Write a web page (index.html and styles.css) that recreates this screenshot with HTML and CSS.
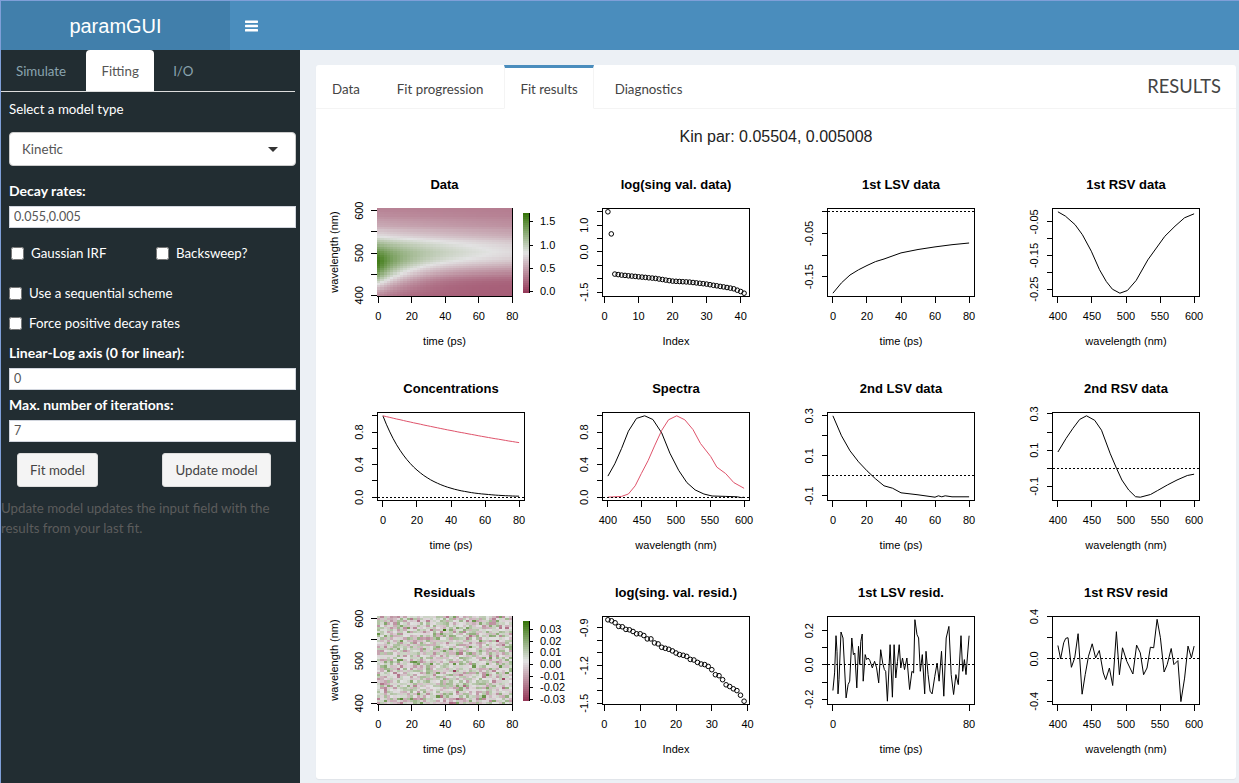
FILE: index.html
```html
<!DOCTYPE html>
<html lang="en">
<head>
    <meta charset="UTF-8">
    <meta name="viewport" content="width=device-width, initial-scale=1.0">
    <title>paramGUI</title>
    <link rel="stylesheet" href="styles.css">
</head>
<body>
    <div class="app">
        <header class="topbar">
            <div class="logo">paramGUI</div>
            <button class="menu-toggle" aria-label="Toggle navigation">
                <svg width="13" height="12" viewBox="0 0 13 12">
                    <rect x="0" y="0.5" width="13" height="2.4" rx="0.6"></rect>
                    <rect x="0" y="4.8" width="13" height="2.4" rx="0.6"></rect>
                    <rect x="0" y="9.1" width="13" height="2.4" rx="0.6"></rect>
                </svg>
            </button>
        </header>
        <div class="layout">
            <aside class="sidebar">
                <ul class="side-tabs">
                    <li>Simulate</li>
                    <li class="active">Fitting</li>
                    <li>I/O</li>
                </ul>
                <div class="side-pane">
                    <div class="field-label first">Select a model type</div>
                    <div class="select-box">
                        <span>Kinetic</span>
                        <span class="caret"></span>
                    </div>
                    <div class="field-label strong decay">Decay rates:</div>
                    <input class="text-input" type="text" value="0.055,0.005">
                    <div class="check-row inline">
                        <label class="check gaussian"><input type="checkbox">Gaussian IRF</label>
                        <label class="check"><input type="checkbox">Backsweep?</label>
                    </div>
                    <label class="check block sequential"><input type="checkbox">Use a sequential scheme</label>
                    <label class="check block positive"><input type="checkbox">Force positive decay rates</label>
                    <div class="field-label strong linear">Linear-Log axis (0 for linear):</div>
                    <input class="text-input" type="text" value="0">
                    <div class="field-label strong iterations">Max. number of iterations:</div>
                    <input class="text-input" type="text" value="7">
                    <div class="button-row">
                        <button class="side-button fit">Fit model</button>
                        <button class="side-button update">Update model</button>
                    </div>
                    <p class="side-note">Update model updates the input field with the results from your last fit.</p>
                </div>
            </aside>
            <main class="content">
                <section class="tab-card">
                    <ul class="card-tabs">
                        <li>Data</li>
                        <li>Fit progression</li>
                        <li class="active">Fit results</li>
                        <li>Diagnostics</li>
                        <li class="card-title">RESULTS</li>
                    </ul>
                    <h4 class="kin-par">Kin par: 0.05504, 0.005008</h4>
                    <div class="plot-grid" id="plots"></div>
                </section>
            </main>
        </div>
    </div>
    <script src="plots.js"></script>
</body>
</html>
```

FILE: styles.css
```css
/* Base styles */
* {
    box-sizing: border-box;
}

body {
    margin: 0;
    font-family: "Lato", "Noto Sans", sans-serif;
    font-size: 13.3px;
    color: #333;
    background: #ecf0f5;
}

.app {
    width: 1239px;
    height: 783px;
    overflow: hidden;
    border-top: 1px solid #7f9fd8;
    border-left: 1px solid #7f9fd8;
    display: flex;
    flex-direction: column;
}

/* Header */
.topbar {
    display: flex;
    height: 49px;
    flex: none;
    background: #4a8dbd;
}

.logo {
    width: 229px;
    background: #417fab;
    color: white;
    font-family: "Liberation Sans", Arial, sans-serif;
    font-size: 20px;
    line-height: 50px;
    text-align: center;
}

.menu-toggle {
    border: none;
    background: none;
    padding: 0 0 0 15px;
    height: 49px;
    display: flex;
    align-items: center;
}

.menu-toggle svg {
    fill: white;
}

.layout {
    display: flex;
    flex: 1;
    min-height: 0;
}

/* Sidebar */
.sidebar {
    width: 299px;
    flex: none;
    background: #222d32;
    color: white;
}

.side-tabs {
    list-style: none;
    margin: 0;
    padding: 0;
    display: flex;
    width: 294px;
    height: 42px;
    border-bottom: 1px solid #ddd;
}

.side-tabs li {
    padding: 0 15px;
    line-height: 42px;
    color: #8aa4af;
}

.side-tabs li.active {
    width: 68px;
    margin-left: 5px;
    margin-right: 4px;
    text-align: center;
    padding: 0;
    background: white;
    color: #555;
    border-radius: 4px 4px 0 0;
}

.side-pane {
    padding: 0 4px 0 8px;
}

.field-label {
    line-height: 20px;
}

.field-label.strong {
    font-size: 14px;
    font-weight: bold;
}

.field-label.first {
    margin-top: 7px;
}

.field-label.decay {
    margin-top: 15px;
    margin-bottom: 5px;
}

.field-label.linear {
    margin-top: 10px;
    margin-bottom: 5px;
}

.field-label.iterations {
    margin-top: 5px;
    margin-bottom: 5px;
}

.select-box {
    margin-top: 13px;
    height: 34px;
    padding: 0 17px 0 12px;
    background: white;
    color: #555;
    border: 1px solid #ccc;
    border-radius: 4px;
    display: flex;
    justify-content: space-between;
    align-items: center;
}

.caret {
    width: 0;
    height: 0;
    border-left: 5.5px solid transparent;
    border-right: 5.5px solid transparent;
    border-top: 5.5px solid #333;
}

.text-input {
    display: block;
    width: 100%;
    height: 22px;
    padding: 0 4px 1px;
    border: 1px solid #d2d6de;
    background: white;
    color: #555;
    font-family: inherit;
    font-size: 12.5px;
}

.check {
    display: flex;
    align-items: center;
    gap: 7px;
    line-height: 20px;
}

.check input {
    width: 13px;
    height: 13px;
    margin: 0;
}

.check-row.inline {
    display: flex;
    margin-top: 15px;
    padding-left: 2px;
}

.check.gaussian {
    width: 145px;
}

.check.block.sequential {
    margin-top: 20px;
}

.check.block.positive {
    margin-top: 10px;
}

.button-row {
    display: flex;
    gap: 64px;
    margin: 11px 0 0 8px;
}

.side-button {
    height: 34px;
    padding: 0 0 1px;
    background: #f4f4f4;
    color: #444;
    border: 1px solid #ddd;
    border-radius: 3px;
    font-family: inherit;
    font-size: 13.3px;
}

.side-button.fit {
    width: 81px;
}

.side-button.update {
    width: 109px;
}

.side-note {
    margin: 11px 0 0 -8px;
    line-height: 20px;
    color: #5c5c5c;
}

/* Results card */
.content {
    flex: 1;
    padding: 15px 3px 4px 16px;
}

.tab-card {
    height: 100%;
    background: white;
    border-radius: 3px;
    box-shadow: 0 1px 1px rgba(0,0,0,0.05);
}

.card-tabs {
    list-style: none;
    margin: 0;
    padding: 0;
    display: flex;
    height: 44px;
    border-bottom: 1px solid #f4f4f4;
}

.card-tabs li {
    height: 44px;
    padding: 0 15px;
    margin-right: 5px;
    line-height: 43px;
    color: #444;
    border: 1px solid transparent;
    border-top: 3px solid transparent;
}

.card-tabs li.active {
    background: white;
    border-color: #f4f4f4;
    border-top-color: #4a8dbd;
    border-bottom-color: white;
}

.card-tabs li.card-title {
    margin-left: auto;
    margin-right: 0;
    padding: 0 14px 0 0;
    font-size: 18.3px;
    line-height: 36px;
}

.kin-par {
    margin: 16px 0 17px;
    font-family: "Liberation Sans", Arial, sans-serif;
    font-size: 16px;
    font-weight: normal;
    line-height: 24px;
    color: #222;
    text-align: center;
}

/* Plots */
.plot-grid {
    display: grid;
    grid-template-columns: repeat(4, 225px);
    grid-auto-rows: 204px;
    padding-left: 11px;
}

.plot {
    display: block;
    overflow: visible;
    font-family: "Liberation Sans", Arial, sans-serif;
}

.plot text {
    fill: black;
    text-anchor: middle;
}

.plot-title {
    font-size: 13px;
    font-weight: bold;
}

.plot-axis-label {
    font-size: 11px;
}

.plot .plot-tick-label {
    font-size: 11px;
}

.plot .legend-label {
    font-size: 11px;
    text-anchor: start;
}

.plot-line {
    fill: none;
    stroke: black;
    stroke-width: 1;
}

.plot-line.second {
    stroke: #df536b;
}

.plot-dots {
    fill: none;
    stroke: black;
    stroke-width: 1;
}

.plot-dotted {
    stroke: black;
    stroke-width: 1;
    stroke-dasharray: 2 2;
    shape-rendering: crispEdges;
}

.plot-frame {
    fill: none;
    stroke: black;
    stroke-width: 1;
    shape-rendering: crispEdges;
}

.plot-tick {
    stroke: black;
    stroke-width: 1;
    shape-rendering: crispEdges;
}

.heat-cell {
    shape-rendering: crispEdges;
}
```

FILE: plots.js
```js
var SVG_NS = "http://www.w3.org/2000/svg";
var BOX = { l: 50.5, r: 197.5, t: 42.5, b: 130.5 };

function add(parent, tag, attrs, text) {
    var node = document.createElementNS(SVG_NS, tag);
    for (var key in attrs) node.setAttribute(key, attrs[key]);
    if (text !== undefined) node.textContent = text;
    parent.appendChild(node);
    return node;
}

function newPlot(title, xlabel, titleX) {
    var svg = add(document.getElementById("plots"), "svg", { class: "plot", width: 225, height: 204 });
    add(svg, "text", { class: "plot-title", x: titleX, y: 22.5 }, title);
    add(svg, "text", { class: "plot-axis-label", x: titleX, y: 179 }, xlabel);
    return svg;
}

function xTick(svg, x, label) {
    var px = Math.round(x - 0.5) + 0.5;
    add(svg, "line", { class: "plot-tick", x1: px, x2: px, y1: BOX.b, y2: BOX.b + 6 });
    if (label !== null) add(svg, "text", { class: "plot-tick-label", x: x, y: 154 }, label);
}

function yTick(svg, y, label, x0) {
    var py = Math.round(y - 0.5) + 0.5;
    add(svg, "line", { class: "plot-tick", x1: x0 - 6, x2: x0, y1: py, y2: py });
    if (label !== null) {
        add(svg, "text", { class: "plot-tick-label", transform: "translate(36 " + y + ") rotate(-90)" }, label);
    }
}

function linePlot(spec) {
    var svg = newPlot(spec.title, spec.xlabel, (BOX.l + BOX.r) / 2);
    var xpad = (spec.xlim[1] - spec.xlim[0]) * 0.04;
    var ypad = (spec.ylim[1] - spec.ylim[0]) * 0.04;
    var sx = function (v) {
        return BOX.l + (v - spec.xlim[0] + xpad) / (spec.xlim[1] - spec.xlim[0] + 2 * xpad) * (BOX.r - BOX.l);
    };
    var sy = function (v) {
        return BOX.b - (v - spec.ylim[0] + ypad) / (spec.ylim[1] - spec.ylim[0] + 2 * ypad) * (BOX.b - BOX.t);
    };

    (spec.lines || []).forEach(function (pts, i) {
        var d = pts.map(function (p) { return sx(p[0]).toFixed(1) + "," + sy(p[1]).toFixed(1); }).join(" ");
        add(svg, "polyline", { class: i ? "plot-line second" : "plot-line", points: d });
    });
    if (spec.dots) {
        spec.dots.forEach(function (p) {
            add(svg, "circle", { class: "plot-dots", cx: sx(p[0]).toFixed(1), cy: sy(p[1]).toFixed(1), r: 2.3 });
        });
    }
    if (spec.zero) {
        var y0 = Math.round(sy(0) - 0.5) + 0.5;
        add(svg, "line", { class: "plot-dotted", x1: BOX.l, x2: BOX.r, y1: y0, y2: y0 });
    }

    add(svg, "rect", { class: "plot-frame", x: BOX.l, y: BOX.t, width: BOX.r - BOX.l, height: BOX.b - BOX.t });
    spec.xticks.forEach(function (v) { xTick(svg, sx(v), String(v)); });
    spec.yticks.forEach(function (v) {
        var shown = spec.ylabels.indexOf(v) >= 0;
        yTick(svg, sy(v), shown ? v.toFixed(spec.ydigits) : null, BOX.l);
    });
}

// maroon - grey - green ramp, t from 0 to 1
function ramp(t) {
    var low = [150, 58, 90], mid = [226, 226, 226], high = [56, 118, 12];
    t = Math.max(0, Math.min(1, t));
    var a = t < 0.5 ? low : mid;
    var b = t < 0.5 ? mid : high;
    var f = t < 0.5 ? t * 2 : t * 2 - 1;
    return "rgb(" + a.map(function (c, i) { return Math.round(c + (b[i] - c) * f); }).join(",") + ")";
}

function heatPlot(spec) {
    var svg = newPlot(spec.title, "time (ps)", 117.5);
    var n = 41, left = 50, right = 185, top = 42, bottom = 130;
    for (var i = 0; i < n; i++) {
        var x0 = Math.round(left + i * (right - left) / n);
        var x1 = Math.round(left + (i + 1) * (right - left) / n);
        for (var j = 0; j < n; j++) {
            var y0 = Math.round(top + j * (bottom - top) / n);
            var y1 = Math.round(top + (j + 1) * (bottom - top) / n);
            add(svg, "rect", {
                class: "heat-cell", x: x0, y: y0, width: x1 - x0, height: y1 - y0,
                fill: ramp(spec.value(i / (n - 1), 1 - j / (n - 1)))
            });
        }
    }
    add(svg, "polyline", { class: "plot-frame", points: "50,130.5 185.5,130.5 185.5,42" });

    [0, 20, 40, 60, 80].forEach(function (v) { xTick(svg, 51.3 + v * 1.675, String(v)); });
    [400, 450, 500, 550, 600].forEach(function (v, i) {
        yTick(svg, 129.3 - i * 21.15, i % 2 ? null : String(v), 50);
    });
    add(svg, "text", {
        class: "plot-axis-label",
        transform: "translate(10.5 86) rotate(-90)"
    }, "wavelength (nm)");

    for (var k = 0; k < 40; k++) {
        add(svg, "rect", { class: "heat-cell", x: 196, y: 47 + k * 2, width: 6, height: 2, fill: ramp(1 - k / 39) });
    }
    add(svg, "line", { class: "plot-tick", x1: 202.5, x2: 202.5, y1: 47, y2: 127 });
    spec.legend.forEach(function (item) {
        add(svg, "line", { class: "plot-tick", x1: 202.5, x2: 206, y1: item[1] + 0.5, y2: item[1] + 0.5 });
        add(svg, "text", { class: "legend-label", x: 213, y: item[1] + 4 }, item[0]);
    });
}

/* data */
function range(from, to, step) {
    var out = [];
    for (var v = from; v <= to; v += step) out.push(v);
    return out;
}

function lerp(knots, x) {
    for (var i = 1; i < knots.length; i++) {
        if (x <= knots[i][0]) {
            var a = knots[i - 1], b = knots[i];
            return a[1] + (b[1] - a[1]) * (x - a[0]) / (b[0] - a[0]);
        }
    }
    return knots[knots.length - 1][1];
}

var TIME = { xlabel: "time (ps)", xlim: [0, 80], xticks: [0, 20, 40, 60, 80] };
var WAVE = { xlabel: "wavelength (nm)", xlim: [400, 600], xticks: [400, 450, 500, 550, 600] };

function withAxis(axis, spec) {
    spec.xlabel = axis.xlabel;
    spec.xlim = axis.xlim;
    spec.xticks = spec.xticks || axis.xticks;
    return spec;
}

var spectrum1 = [[400,.26],[410,.41],[420,.6],[430,.81],[442,.967],[454,1],[466,.954],[479,.79],[491,.54],[504,.33],[516,.18],[528,.09],[541,.04],[553,.015],[573,.01],[590,.005],[596,-.005],[600,0]];
var spectrum2 = [[400,0],[420,.01],[430,.04],[440,.14],[449,.29],[459,.45],[469,.64],[479,.82],[489,.95],[501,1],[513,.95],[525,.83],[536,.66],[551,.5],[560,.37],[573,.29],[585,.18],[600,.11]];

var svTail = [[3,-.825],[5,-.863],[8,-.9],[10,-.925],[15,-.988],[20,-1.088],[25,-1.125],[30,-1.2],[33,-1.263],[36,-1.325],[38,-1.375],[40,-1.475],[41,-1.5375]];
var svData = [[1,1.5],[2,.675]].concat(range(3, 41, 1).map(function (i) { return [i, lerp(svTail, i)]; }));

var svResid = [-.836,-.844,-.86,-.889,-.892,-.913,-.916,-.929,-.948,-.948,-.961,-.988,-.988,-1.02,-1.028,-1.055,-1.063,-1.071,-1.084,-1.1,-1.113,-1.119,-1.127,-1.151,-1.156,-1.175,-1.188,-1.193,-1.207,-1.233,-1.273,-1.281,-1.313,-1.353,-1.367,-1.385,-1.399,-1.436,-1.484]
    .map(function (v, i) { return [i + 1, v]; });

var lsvResid = [[160,348],[165,295],[169,183],[172,230],[175,358],[178,315],[184,172],[190,190],[194,270],[199,370],[205,330],[210,320],[216,190],[221,240],[225,235],[231,340],[236,215],[240,270],[243,200],[247,178],[250,320],[256,240],[260,255],[265,250],[270,258],[277,280],[284,260],[290,280],[296,325],[302,225],[308,265],[313,285],[317,290],[322,380],[330,210],[337,368],[342,210],[347,310],[352,260],[357,210],[362,280],[367,250],[373,285],[380,250],[388,345],[395,290],[400,295],[404,135],[410,180],[415,190],[420,290],[426,240],[433,358],[437,230],[443,300],[449,350],[455,358],[463,305],[470,265],[476,320],[483,230],[490,365],[497,190],[505,155],[512,300],[519,360],[526,300],[533,330],[541,183],[546,290],[551,255],[556,300],[565,183]]
    .map(function (p) { return [(p[0] - 160) / 5.0625, (271 - p[1]) / 515]; });

var rsvResid = [[835,213],[843,253],[852,205],[858,192],[865,190],[875,278],[885,250],[895,178],[907,358],[916,300],[926,245],[937,208],[947,250],[958,228],[970,295],[977,315],[988,280],[998,332],[1009,172],[1018,300],[1027,220],[1040,260],[1058,298],[1069,212],[1080,235],[1090,300],[1100,280],[1110,218],[1120,220],[1130,135],[1140,190],[1151,292],[1160,270],[1172,222],[1180,270],[1192,258],[1201,380],[1212,310],[1222,215],[1232,250],[1240,215]]
    .map(function (p) { return [(p[0] - 835) / 2.025 + 400, (253 - p[1]) / 315]; });

// small seeded generator so the residuals draw the same every time
var seed = 12345;
function rnd() {
    seed = (seed * 16807) % 2147483647;
    return seed / 2147483647;
}

/* row 1 */
heatPlot({
    title: "Data",
    legend: [["1.5", 55], ["1.0", 79], ["0.5", 102], ["0.0", 125]],
    value: function (tx, wy) {
        var t = tx * 80, w = 400 + wy * 200;
        var tail = w > 540 ? 0.1 * (w - 540) / 60 : 0;
        return (0.2 + tail + 1.0 * Math.exp(-0.055 * t) * lerp(spectrum1, w) + 1.05 * Math.exp(-0.005 * t) * lerp(spectrum2, w)) / 1.9;
    }
});
linePlot({
    title: "log(sing val. data)",
    xlabel: "Index",
    xlim: [1, 41], xticks: [0, 10, 20, 30, 40],
    ylim: [-1.54, 1.5],
    yticks: [-1.5, -1, -.5, 0, .5, 1, 1.5], ylabels: [-1.5, 0, 1], ydigits: 1,
    dots: svData
});
linePlot(withAxis(TIME, {
    title: "1st LSV data",
    ylim: [-.188, 0], zero: true,
    yticks: [-.15, -.1, -.05, 0], ylabels: [-.15, -.05], ydigits: 2,
    lines: [[[0,-.188],[2.5,-.176],[5,-.164],[10,-.146],[15,-.134],[20,-.124],[25,-.115],[30,-.109],[40,-.095],[50,-.087],[60,-.081],[70,-.076],[80,-.072]]]
}));
linePlot(withAxis(WAVE, {
    title: "1st RSV data",
    ylim: [-.262, -.02],
    yticks: [-.25, -.2, -.15, -.1, -.05], ylabels: [-.25, -.15, -.05], ydigits: 2,
    lines: [[[400,-.02],[411,-.033],[425,-.058],[436,-.088],[449,-.137],[461,-.192],[471,-.227],[480,-.25],[491,-.262],[502,-.254],[515,-.224],[532,-.163],[557,-.093],[572,-.063],[586,-.038],[600,-.026]]]
}));

/* row 2 */
linePlot(withAxis(TIME, {
    title: "Concentrations",
    ylim: [0, 1], zero: true,
    yticks: [0, .2, .4, .6, .8, 1], ylabels: [0, .4, .8], ydigits: 1,
    lines: [
        range(0, 80, 2).map(function (t) { return [t, Math.exp(-0.055 * t)]; }),
        range(0, 80, 2).map(function (t) { return [t, Math.exp(-0.005 * t)]; })
    ]
}));
linePlot(withAxis(WAVE, {
    title: "Spectra",
    ylim: [0, 1], zero: true,
    yticks: [0, .2, .4, .6, .8, 1], ylabels: [0, .4, .8], ydigits: 1,
    lines: [spectrum1, spectrum2]
}));
linePlot(withAxis(TIME, {
    title: "2nd LSV data",
    ylim: [-.107, .3], zero: true,
    yticks: [-.1, 0, .1, .2, .3], ylabels: [-.1, .1, .3], ydigits: 1,
    lines: [[[0,.3],[5,.2],[10,.125],[15,.07],[20,.025],[25,-.015],[30,-.05],[35,-.062],[40,-.085],[50,-.095],[60,-.107],[62,-.1],[64,-.105],[66,-.1],[70,-.105],[80,-.105]]]
}));
linePlot(withAxis(WAVE, {
    title: "2nd RSV data",
    ylim: [-.16, .29], zero: true,
    yticks: [-.1, 0, .1, .2, .3], ylabels: [-.1, .1, .3], ydigits: 1,
    lines: [[[400,.09],[412,.165],[422,.22],[432,.27],[442,.29],[454,.265],[464,.21],[477,.08],[486,0],[494,-.065],[504,-.12],[514,-.157],[521,-.16],[536,-.145],[546,-.124],[561,-.092],[575,-.065],[590,-.04],[600,-.033]]]
}));

/* row 3 */
heatPlot({
    title: "Residuals",
    legend: [["0.03", 55], ["0.02", 67], ["0.01", 78], ["0.00", 90], ["-0.01", 102], ["-0.02", 113], ["-0.03", 125]],
    value: function () {
        var v = (rnd() + rnd() + rnd()) / 3 - 0.5;
        return 0.5 + v * 0.8 + (rnd() > 0.97 ? (rnd() - 0.5) * 0.7 : 0);
    }
});
linePlot({
    title: "log(sing. val. resid.)",
    xlabel: "Index",
    xlim: [1, 39], xticks: [0, 10, 20, 30, 40],
    ylim: [-1.484, -.836],
    yticks: [-1.5, -1.4, -1.3, -1.2, -1.1, -1, -.9], ylabels: [-1.5, -1.2, -.9], ydigits: 1,
    dots: svResid
});
linePlot(withAxis(TIME, {
    title: "1st LSV resid.",
    xticks: [0, 80],
    ylim: [-.212, .264], zero: true,
    yticks: [-.2, -.1, 0, .1, .2], ylabels: [-.2, 0, .2], ydigits: 1,
    lines: [lsvResid]
}));
linePlot(withAxis(WAVE, {
    title: "1st RSV resid",
    ylim: [-.4, .37], zero: true,
    yticks: [-.4, -.2, 0, .2, .4], ylabels: [-.4, 0, .4], ydigits: 1,
    lines: [rsvResid]
}));
```
